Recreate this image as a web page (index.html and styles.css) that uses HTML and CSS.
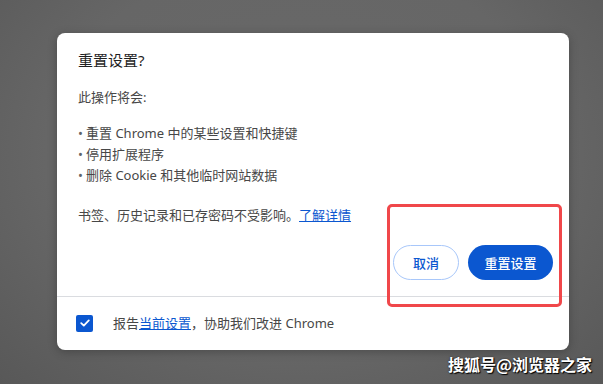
FILE: index.html
```html
<!DOCTYPE html>
<html>
<head>
	<meta charset="utf-8">
	<meta name="viewport" content="width=device-width"/>
	<link rel="stylesheet" href="styles.css">
</head>
<body>
<div class="page">
	<div class="dialog">
		<div class="main">
			<div class="title">重置设置?</div>
			<div class="intro">此操作将会:</div>
			<ul class="list">
				<li>重置 Chrome 中的某些设置和快捷键</li>
				<li>停用扩展程序</li>
				<li>删除 Cookie 和其他临时网站数据</li>
			</ul>
			<div class="note">书签、历史记录和已存密码不受影响。<a href="#" class="link">了解详情</a></div>
			<div class="actions">
				<button class="btn cancel">取消</button>
				<button class="btn primary">重置设置</button>
			</div>
		</div>
		<div class="foot">
			<span class="check">
				<svg width="12" height="12" viewBox="0 0 12 12"><path d="M2.2 6.2 L4.8 8.6 L9.8 3.4" fill="none" stroke="#fff" stroke-width="1.8" stroke-linecap="round" stroke-linejoin="round"/></svg>
			</span>
			<span class="foottext">报告<a href="#" class="link">当前设置</a>，协助我们改进 Chrome</span>
		</div>
		<div class="mark"></div>
	</div>
	<div class="water">搜狐号@浏览器之家</div>
</div>
</body>
</html>
```

FILE: styles.css
```css
* {
	padding: 0;
	margin: 0;
	box-sizing: border-box;
}

body {
	width: 603px;
	height: 384px;
	overflow: hidden;
	background: radial-gradient(ellipse at 50% 40%, #696969 0%, #666 60%, #585858 100%);
	font-family: "Noto Sans", "Noto Sans CJK SC", sans-serif;
	color: #474747;
}

.page {
	position: relative;
	width: 603px;
	height: 384px;
	padding: 33px 0 0 57px;
}

.dialog {
	position: relative;
	width: 512px;
	height: 317px;
	background: #fff;
	border-radius: 8px;
	box-shadow: 0 2px 10px rgba(0, 0, 0, 0.25);
	display: flex;
	flex-direction: column;
}

.main {
	padding: 17px 16px 0 21px;
	height: 264px;
	border-bottom: 1px solid #dadce0;
}

.title {
	font-size: 15px;
	line-height: 20px;
	color: #1f1f1f;
}

.intro {
	font-size: 13px;
	line-height: 20px;
	margin-top: 17px;
}

.list {
	list-style: none;
	margin-top: 16px;
	font-size: 13px;
	line-height: 21px;
}

.list li::before {
	content: "•";
	display: inline-block;
	width: 8px;
	color: #5f6368;
}

.note {
	font-size: 13px;
	line-height: 20px;
	margin-top: 19px;
}

.link {
	color: #0b57d0;
	text-decoration: underline;
}

.actions {
	display: flex;
	justify-content: flex-end;
	gap: 9px;
	margin-top: 20px;
}

.btn {
	height: 35px;
	border-radius: 18px;
	font-family: "Noto Sans", "Noto Sans CJK SC", sans-serif;
	font-size: 13px;
	font-weight: 500;
}

.cancel {
	width: 66px;
	background: #fff;
	border: 1px solid #a8c7fa;
	color: #0b57d0;
}

.primary {
	width: 85px;
	background: #0b57d0;
	border: none;
	color: #fff;
}

.foot {
	flex: 1;
	display: flex;
	align-items: center;
	padding-left: 19px;
	padding-bottom: 1px;
}

.check {
	width: 17px;
	height: 17px;
	border-radius: 2px;
	background: #0b57d0;
	display: flex;
	align-items: center;
	justify-content: center;
}

.foottext {
	margin-left: 20px;
	font-size: 13px;
	line-height: 20px;
	color: #474747;
}

.mark {
	position: absolute;
	left: 330px;
	top: 171px;
	width: 175px;
	height: 103px;
	border: 3px solid #f0474a;
	border-radius: 5px;
}

.water {
	position: absolute;
	left: 448px;
	top: 352px;
	font-size: 16px;
	line-height: 24px;
	font-weight: bold;
	color: #fff;
	font-family: "Noto Sans CJK SC", sans-serif;
	text-shadow: 1px 1px 1px #000, 0 0 2px rgba(0, 0, 0, 0.6);
}
```
